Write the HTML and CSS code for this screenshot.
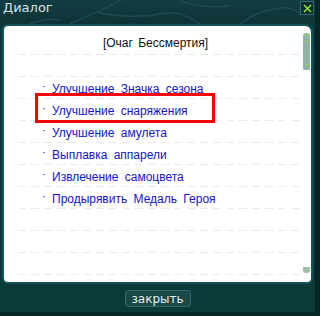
FILE: index.html
```html
<!DOCTYPE html>
<html lang="ru">
<head>
  <meta charset="UTF-8" />
  <title>Диалог</title>
  <link rel="stylesheet" href="styles.css">
</head>
<body>
  <div class="window">
    <div class="titlebar">
      <svg class="cracks" width="316" height="24" viewBox="0 0 316 24">
        <path d="M70 24 C90 14 110 8 120 0" />
        <path d="M96 12 C110 16 140 18 160 14 C175 11 185 14 200 24" />
        <path d="M180 0 C190 6 210 8 230 6" />
        <path d="M240 24 C250 16 262 10 280 8 C290 7 296 10 300 14" />
        <path d="M30 24 C40 20 48 18 60 20" />
      </svg>
      <span class="title">Диалог</span>
      <span class="close">
        <svg width="9" height="9" viewBox="0 0 9 9"><path d="M1 1 L8 8 M8 1 L1 8" /></svg>
      </span>
    </div>

    <div class="panel">
      <div class="content">
        <div class="row heading">[Очаг Бессмертия]</div>
        <div class="row"></div>
        <div class="row item"><span class="dot">·</span>Улучшение Значка сезона</div>
        <div class="row item"><span class="dot">·</span>Улучшение снаряжения<span class="mark"></span></div>
        <div class="row item"><span class="dot">·</span>Улучшение амулета</div>
        <div class="row item"><span class="dot">·</span>Выплавка аппарели</div>
        <div class="row item"><span class="dot">·</span>Извлечение самоцвета</div>
        <div class="row item"><span class="dot">·</span>Продырявить Медаль Героя</div>
        <div class="row"></div>
        <div class="row"></div>
        <div class="row"></div>
      </div>
      <div class="scroll">
        <div class="thumb">
          <svg width="6" height="36" viewBox="0 0 6 36">
            <path d="M1 3 L3 1 L5 3 Z" />
            <path d="M1 9 L3 7 L5 9 Z" />
            <path d="M1 31 L3 33 L5 31 Z" />
          </svg>
        </div>
        <div class="down"></div>
      </div>
    </div>

    <div class="footer">
      <button class="btn">закрыть</button>
    </div>
  </div>
</body>
</html>
```

FILE: styles.css
```css
* {
  box-sizing: border-box;
}

body {
  margin: 0;
  width: 320px;
  height: 316px;
  background: #072726;
  font-family: "Liberation Sans", Arial, sans-serif;
  overflow: hidden;
}

.window {
  width: 316px;
  height: 313px;
  background: #0b3a3a;
  border-right: 1px solid #06231f;
  border-bottom: 1px solid #06231f;
  border-radius: 0 0 4px 0;
  display: flex;
  flex-direction: column;
}

.titlebar {
  position: relative;
  height: 24px;
  padding: 0 1px 0 3px;
  display: flex;
  align-items: flex-start;
  justify-content: space-between;
  background: linear-gradient(#123d42, #0f3337);
}

.cracks {
  position: absolute;
  left: 0;
  top: 0;
}

.cracks path {
  fill: none;
  stroke: #1c4a50;
  stroke-width: 1.5;
}

.title {
  position: relative;
  color: #d6e2e2;
  font-family: "DejaVu Sans", sans-serif;
  font-size: 13px;
  line-height: 16px;
}

.close {
  position: relative;
  width: 14px;
  height: 14px;
  margin-top: 1px;
  background: #0d2b2e;
  border: 1px solid #2d6f6f;
  display: flex;
  align-items: center;
  justify-content: center;
}

.close path {
  stroke: #8be22c;
  stroke-width: 1.6;
}

.panel {
  height: 256px;
  margin: 2px 4px 0 4px;
  background: #fff;
  border-radius: 4px 6px 4px 4px;
  box-shadow: 0 0 0 2px #145456;
  display: flex;
}

.content {
  flex: 1;
  padding: 7px 0 0 14px;
}

.row {
  position: relative;
  width: 281px;
  height: 22px;
  display: flex;
  align-items: center;
  background: repeating-linear-gradient(to right, #ebebeb 0 8px, transparent 8px 13px) left bottom / 100% 1px no-repeat;
}

.heading {
  justify-content: center;
  padding-right: 6px;
  padding-bottom: 2px;
  color: #111;
  font-size: 12px;
  word-spacing: 2px;
}

.item {
  padding-left: 24px;
  padding-top: 1px;
  color: #1414c8;
  font-size: 12px;
  word-spacing: 3px;
}

.dot {
  width: 10px;
  margin-top: -6px;
  color: #1414c8;
  font-size: 11px;
}

.mark {
  position: absolute;
  left: 17px;
  top: -6px;
  width: 180px;
  height: 30px;
  border: 3px solid #ff0000;
}

.scroll {
  width: 7px;
  margin-right: 1px;
  padding: 7px 0 9px;
  display: flex;
  flex-direction: column;
  align-items: center;
}

.thumb {
  width: 7px;
  height: 37px;
  background: #8fb4a6;
  border-radius: 3px 3px 1px 1px;
  display: flex;
  justify-content: center;
}

.thumb path {
  fill: #8ce04a;
}

.down {
  margin-top: auto;
  width: 7px;
  height: 6px;
  background: #9dbfa8;
  border-radius: 0 0 3px 3px;
}

.footer {
  flex: 1;
  display: flex;
  justify-content: center;
  padding-top: 8px;
}

.btn {
  width: 66px;
  height: 17px;
  padding: 0;
  background: #1a4747;
  border: 1px solid #2f6a6a;
  border-radius: 3px;
  color: #e4eeee;
  font-family: "DejaVu Sans", sans-serif;
  font-size: 12px;
  line-height: 14px;
}
```
